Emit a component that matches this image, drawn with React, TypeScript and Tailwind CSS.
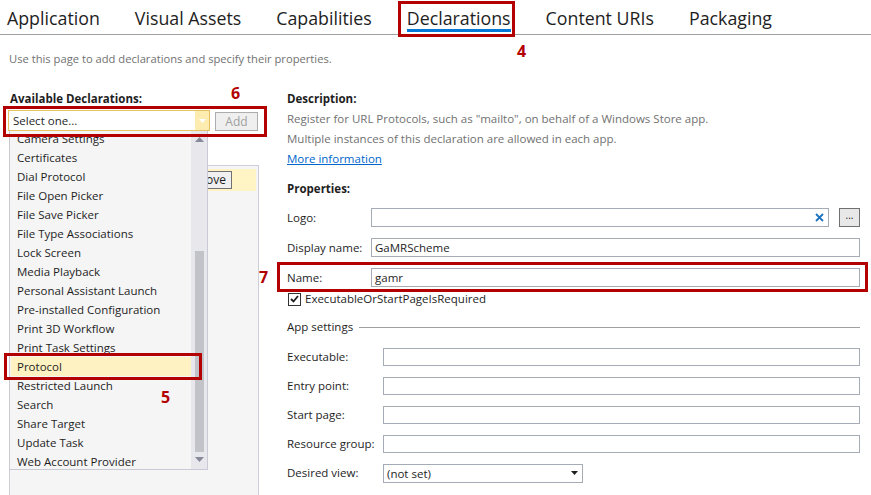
import React from "react";

const tabs = ["Application", "Visual Assets", "Capabilities", "Declarations", "Content URIs", "Packaging"];

const items = [
  "Camera Settings",
  "Certificates",
  "Dial Protocol",
  "File Open Picker",
  "File Save Picker",
  "File Type Associations",
  "Lock Screen",
  "Media Playback",
  "Personal Assistant Launch",
  "Pre-installed Configuration",
  "Print 3D Workflow",
  "Print Task Settings",
  "Protocol",
  "Restricted Launch",
  "Search",
  "Share Target",
  "Update Task",
  "Web Account Provider",
];

function Field({ label, value, labelW }: { label: string; value?: string; labelW: string }) {
  return (
    <div className="flex items-center h-[19px]">
      <div className={`${labelW} shrink-0 leading-[19px]`}>{label}</div>
      <div className="flex-1 h-[19px] border border-[#a5acb5] bg-white pl-[3px] leading-[17px]">{value}</div>
    </div>
  );
}

export default function App() {
  return (
    <div className="relative w-[871px] h-[495px] overflow-hidden bg-white text-[#1e1e1e] font-['Open_Sans',sans-serif] text-[11.5px]">
      {/* Tabs */}
      <div className="flex h-[35px] border-b border-[#a0a0a0] pl-[7px] gap-[35px] text-[17.8px]">
        {tabs.map((t) => (
          <div key={t} className="relative pt-[7px] leading-[22px] h-full">
            {t}
            {t === "Declarations" && <div className="absolute left-0 right-0 bottom-[2px] h-[3px] bg-[#0078d7]" />}
          </div>
        ))}
      </div>

      <div className="mt-[16px] pl-[9px] leading-[16px] text-[11.2px] text-[#717171]">
        Use this page to add declarations and specify their properties.
      </div>

      <div className="flex h-[428px]">
        {/* Left column */}
        <div className="w-[287px] shrink-0 pl-[8px] flex flex-col">
          <div className="mt-[24px] pl-[2px] leading-[16px] font-bold">Available Declarations:</div>
          <div className="relative mt-[3px] flex items-start z-10">
            <div className="w-[202px] h-[21px] border border-[#e5c365] bg-white flex relative z-10">
              <div className="flex-1 pl-[4px] leading-[19px]">Select one...</div>
              <div className="w-[14px] h-full bg-[#fcecb0] flex items-center justify-center">
                <svg width="7" height="4" viewBox="0 0 7 4">
                  <path d="M0 0h7L3.5 4z" fill="#ffffff" />
                </svg>
              </div>
            </div>
            <div className="ml-[5px] mt-[2px] w-[43px] h-[19px] border border-[#adadad] bg-[#efefef] text-[#a0a0a0] text-center leading-[17px] text-[12px]">
              Add
            </div>
            {/* Dropdown list */}
            <div className="absolute left-[1px] top-[20px] w-[199px] h-[340px] border border-[#c9cad6] border-t-0 bg-[#f5f5f5] overflow-hidden flex">
              <div className="flex-1 -mt-[1px] pl-[1px]">
                {items.map((it) => (
                  <div
                    key={it}
                    className={`h-[19px] leading-[19px] pl-[6px] ${it === "Protocol" ? "bg-[#fff2c2]" : ""}`}
                  >
                    {it}
                  </div>
                ))}
              </div>
              <div className="w-[16px] h-full bg-[#e8e8ec] flex flex-col items-center">
                <svg className="mt-[7px]" width="9" height="5" viewBox="0 0 9 5">
                  <path d="M0 5L4.5 0L9 5z" fill="#868999" />
                </svg>
                <div className="mt-[109px] w-[9px] h-[201px] bg-[#c2c3c9]" />
                <svg className="mt-[5px]" width="9" height="5" viewBox="0 0 9 5">
                  <path d="M0 0h9L4.5 5z" fill="#868999" />
                </svg>
              </div>
            </div>
          </div>
          {/* Added declarations panel */}
          <div className="mt-[34px] ml-[1px] w-[250px] flex-1 border border-[#cfcfdc] border-b-0 bg-[#f5f5f5] pt-[3px] px-[2px]">
            <div className="h-[22px] bg-[#fff4c4] flex items-center justify-end pr-[24px]">
              <div className="h-[18px] px-[5px] border border-[#707070] bg-[#f0f0f0] leading-[16px] text-[12px]">Remove</div>
            </div>
          </div>
        </div>

        {/* Right column */}
        <div className="flex-1 pr-[11px] flex flex-col">
          <div className="mt-[24px] leading-[16px] font-bold">Description:</div>
          <div className="mt-[2px] text-[#717171] leading-[20px]">
            <div>Register for URL Protocols, such as "mailto", on behalf of a Windows Store app.</div>
            <div>Multiple instances of this declaration are allowed in each app.</div>
            <div className="text-[#0066cc] underline">More information</div>
          </div>
          <div className="mt-[12px] leading-[16px] font-bold">Properties:</div>

          <div className="mt-[11px] flex items-center h-[19px]">
            <div className="w-[84px] shrink-0 leading-[19px]">Logo:</div>
            <div className="flex-1 h-[19px] border border-[#a5acb5] bg-white flex items-center justify-end pr-[4px]">
              <svg width="9" height="9" viewBox="0 0 9 9">
                <path d="M1 1L8 8M8 1L1 8" stroke="#1e73be" strokeWidth="1.8" />
              </svg>
            </div>
            <div className="ml-[10px] w-[21px] h-[19px] border border-[#707070] bg-[#e8e8e8] text-center leading-[13px] text-[10px]">
              ...
            </div>
          </div>
          <div className="mt-[11px]">
            <Field label="Display name:" value="GaMRScheme" labelW="w-[84px]" />
          </div>
          <div className="mt-[11px]">
            <Field label="Name:" value="gamr" labelW="w-[84px]" />
          </div>
          <div className="mt-[5px] flex items-center h-[14px] pl-[1px]">
            <div className="w-[13px] h-[13px] border border-[#333333] bg-white flex items-center justify-center">
              <svg width="9" height="8" viewBox="0 0 9 8">
                <path d="M1 4L3.5 6.5L8 1" stroke="#1e1e1e" strokeWidth="1.8" fill="none" />
              </svg>
            </div>
            <div className="ml-[4px] leading-[14px]">ExecutableOrStartPageIsRequired</div>
          </div>
          <div className="mt-[13px] flex items-center h-[16px]">
            <div className="leading-[16px]">App settings</div>
            <div className="ml-[6px] flex-1 h-px bg-[#a0a0a0]" />
          </div>
          <div className="mt-[13px] flex flex-col gap-[11px]">
            {["Executable:", "Entry point:", "Start page:", "Resource group:"].map((l) => (
              <div key={l} className="flex items-center h-[18px]">
                <div className="w-[96px] shrink-0 leading-[18px]">{l}</div>
                <div className="flex-1 h-[18px] border border-[#a5acb5] bg-white" />
              </div>
            ))}
            <div className="flex items-center h-[18px]">
              <div className="w-[96px] shrink-0 leading-[18px]">Desired view:</div>
              <div className="w-[200px] h-[19px] border border-[#a5acb5] bg-white flex items-center pl-[3px] pr-[4px]">
                <div className="flex-1 leading-[17px]">(not set)</div>
                <svg width="7" height="4" viewBox="0 0 7 4">
                  <path d="M0 0h7L3.5 4z" fill="#1e1e1e" />
                </svg>
              </div>
            </div>
          </div>
        </div>
      </div>

      {/* Annotations */}
      <div className="absolute z-20 left-[398px] top-[1px] w-[117px] h-[36px] border-[3px] border-[#b30000]" />
      <div className="absolute z-20 left-[517px] top-[42px] text-[16px] font-bold text-[#b30000] leading-[18px]">4</div>
      <div className="absolute z-20 left-[3px] top-[106px] w-[264px] h-[31px] border-[3px] border-[#b30000]" />
      <div className="absolute z-20 left-[231px] top-[84px] text-[16px] font-bold text-[#b30000] leading-[18px]">6</div>
      <div className="absolute z-20 left-[4px] top-[353px] w-[198px] h-[27px] border-[3px] border-[#b30000]" />
      <div className="absolute z-20 left-[161px] top-[388px] text-[16px] font-bold text-[#b30000] leading-[18px]">5</div>
      <div className="absolute z-20 left-[277px] top-[262px] w-[591px] h-[30px] border-[3px] border-[#b30000]" />
      <div className="absolute z-20 left-[259px] top-[268px] text-[16px] font-bold text-[#b30000] leading-[18px]">7</div>
    </div>
  );
}
